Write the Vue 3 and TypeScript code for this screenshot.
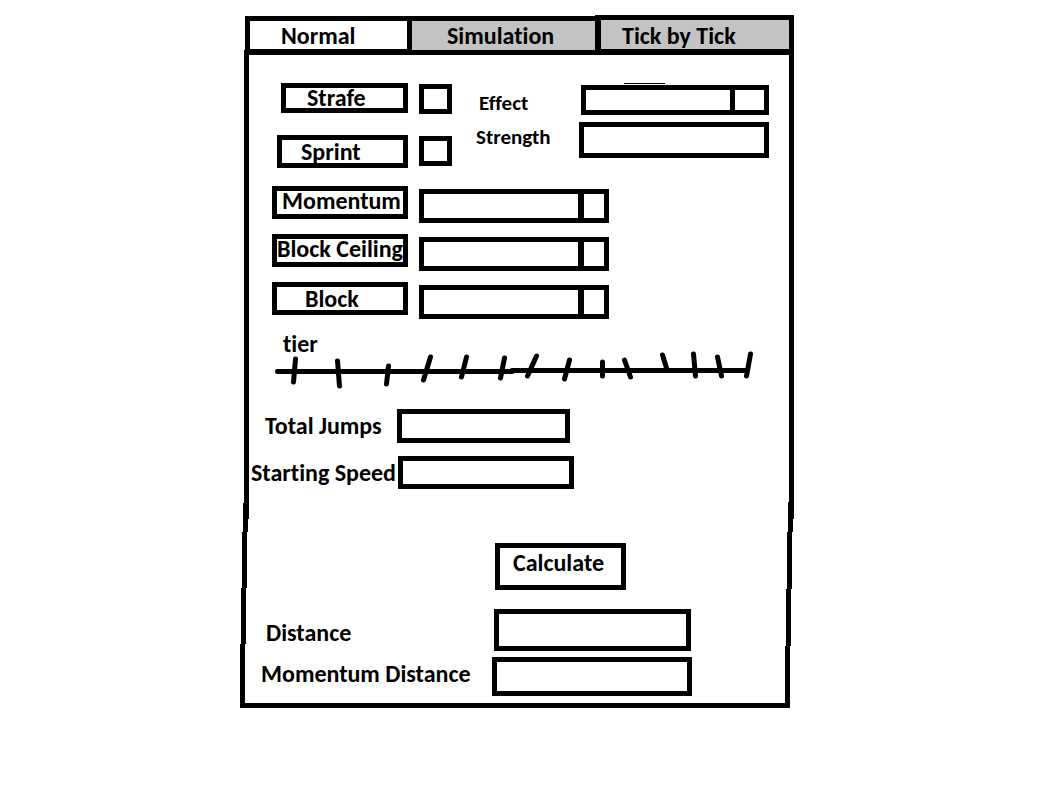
<script setup lang="ts">
import { ref } from 'vue'

type Tick = [number, number, number, number]

const tabs = [
  { id: 'normal', label: 'Normal' },
  { id: 'simulation', label: 'Simulation' },
  { id: 'ticks', label: 'Tick by Tick' },
]
const active = ref('normal')

const switches = [
  { id: 'strafe', label: 'Strafe' },
  { id: 'sprint', label: 'Sprint' },
]

const choices = [
  { id: 'momentum', label: 'Momentum' },
  { id: 'ceiling', label: 'Block Ceiling' },
  { id: 'block', label: 'Block' },
]

const ticks: Tick[] = [
  [295.5, 359, 293.5, 382],
  [337.5, 361, 339.5, 386],
  [388.5, 366, 386.5, 384],
  [430.5, 357, 423.5, 380],
  [466.5, 357, 461.5, 377],
  [504.5, 358, 500.5, 378],
  [536.5, 356, 527.5, 376],
  [569.5, 360, 564.5, 379],
  [602.5, 362, 602.5, 376],
  [624.5, 360, 630.5, 377],
  [662.5, 355, 666.5, 368],
  [693.5, 354, 695.5, 376],
  [717.5, 357, 721.5, 376],
  [750.5, 354, 746.5, 376],
]
</script>

<template>
  <main class="page">
    <form class="sheet" @submit.prevent>
      <svg class="outline" viewBox="0 0 554 693" preserveAspectRatio="none" aria-hidden="true">
        <path
          d="M4 35h5v469h-5z M3 488h5v29h-5z M2 517h5v56h-5z M1 573h5v56h-5z M0 629h5v64h-5z
             M549 35h5v469h-5z M548 487h5v30h-5z M547 517h5v57h-5z M546 574h5v57h-5z M545 631h5v62h-5z
             M0 688h550v5H0z"
        />
      </svg>

      <nav class="tabs">
        <button
          v-for="tab in tabs"
          :key="tab.id"
          type="button"
          class="tab"
          :class="[tab.id, { active: active === tab.id }]"
          @click="active = tab.id"
        >
          {{ tab.label }}
        </button>
      </nav>

      <section class="options">
        <div class="switches">
          <template v-for="item in switches" :key="item.id">
            <label class="name" :class="item.id" :for="item.id">{{ item.label }}</label>
            <input :id="item.id" class="check" type="checkbox" />
          </template>
        </div>
        <div class="effects">
          <label class="effect-label" for="effect">Effect</label>
          <div class="effect-field">
            <select id="effect" class="box drop wide-arrow"><option></option></select>
          </div>
          <label for="strength">Strength</label>
          <input id="strength" class="box strength" type="text" />
        </div>
      </section>

      <section class="choices">
        <div v-for="item in choices" :key="item.id" class="choice">
          <label class="name" :class="item.id" :for="item.id">{{ item.label }}</label>
          <select :id="item.id" class="box drop"><option></option></select>
        </div>
      </section>

      <section class="tier">
        <label for="tier">tier</label>
        <div class="scale">
          <svg viewBox="275 354 478 36" aria-hidden="true">
            <path d="M277.5 371.5H512M512 370.5H747" />
            <line v-for="(t, i) in ticks" :key="i" :x1="t[0]" :y1="t[1]" :x2="t[2]" :y2="t[3]" />
          </svg>
          <input id="tier" type="range" min="0" max="13" value="0" />
        </div>
      </section>

      <section class="numbers">
        <div class="number">
          <label class="jumps" for="jumps">Total Jumps</label>
          <input id="jumps" class="box" type="text" />
        </div>
        <div class="number speed">
          <label for="speed">Starting Speed</label>
          <input id="speed" class="box" type="text" />
        </div>
      </section>

      <button class="calculate" type="submit">Calculate</button>

      <section class="results">
        <div class="result distance">
          <label for="distance">Distance</label>
          <input id="distance" class="box" type="text" readonly />
        </div>
        <div class="result total">
          <label for="momentum-distance">Momentum Distance</label>
          <input id="momentum-distance" class="box" type="text" readonly />
        </div>
      </section>
    </form>
  </main>
</template>

<style>
body {
  margin: 0;
  background: #fff;
}
</style>

<style scoped>
.page {
  padding: 15px 10px 40px 0;
  color: #000;
  font: bold 24px/20px Calibri, Carlito, Lato, sans-serif;
  font-variant-ligatures: none;
}

.page *,
.page *::before {
  box-sizing: border-box;
}

.sheet {
  position: relative;
  max-width: 554px;
  margin: 0 auto;
  padding-bottom: 12px;
}

.outline {
  position: absolute;
  inset: 0;
  width: 100%;
  height: 100%;
  pointer-events: none;
}

label {
  white-space: nowrap;
}

button,
input,
select {
  margin: 0;
  border: 5px solid #000;
  border-radius: 0;
  background: #fff;
  color: #000;
  font: inherit;
  font-variant-ligatures: none;
  appearance: none;
}

.tabs {
  position: relative;
  display: grid;
  grid-template-columns: minmax(0, 167fr) minmax(0, 183fr) minmax(0, 199fr);
  align-items: end;
  margin-left: 5px;
}

.tab {
  height: 39px;
  padding: 2px 0 0;
  border-bottom-width: 6px;
  background: #c3c3c3;
  text-align: left;
  white-space: nowrap;
}

.tab.active {
  background: #fff;
}

.tab.normal {
  padding-left: 31px;
}

.tab.simulation {
  border-left: 0;
  border-right: 0;
  border-bottom-width: 5px;
  padding: 0 0 0 35px;
}

.tab.ticks {
  height: 40px;
  border-left-width: 6px;
  padding-left: 21px;
}

.options {
  display: flex;
  gap: 24px;
  padding: 28px 25px 0 0;
}

.switches {
  display: grid;
  grid-template-columns: 168px 33px;
  gap: 21px 11px;
}

.name {
  justify-self: end;
  width: 136px;
  height: 33px;
  border: 5px solid #000;
}

.name.strafe {
  width: 127px;
  height: 30px;
  padding-left: 21px;
}

.name.sprint {
  width: 131px;
  padding: 2px 0 0 19px;
}

.name.momentum {
  padding-left: 5px;
}

.name.block {
  padding: 2px 0 0 28px;
}

.check {
  width: 33px;
  height: 30px;
  margin-top: 1px;
}

.effects {
  flex: 1;
  display: grid;
  grid-template-columns: 103px 1fr;
  row-gap: 7px;
  align-content: start;
  padding-top: 2px;
  font-size: 21px;
}

.effects label {
  padding-top: 5px;
}

.effects .effect-label {
  padding: 8px 0 0 3px;
}

.effect-field {
  position: relative;
  padding-left: 2px;
}

.effect-field::before {
  content: '';
  position: absolute;
  top: -2px;
  left: 45px;
  width: 41px;
  height: 1px;
  background: #000;
}

.box {
  display: block;
  width: 100%;
  min-width: 0;
  height: 34px;
}

.drop {
  background: linear-gradient(#000, #000) right 20px top / 6px 100% no-repeat #fff;
}

.wide-arrow {
  height: 30px;
  background-position: right 29px top;
  background-size: 5px 100%;
}

.strength {
  height: 36px;
}

.choices {
  display: grid;
  gap: 11px;
  padding-top: 18px;
}

.choice {
  display: grid;
  grid-template-columns: 168px minmax(0, 190px);
  column-gap: 11px;
}

.choice .box {
  margin-top: 3px;
}

.tier {
  padding: 15px 41px 0 35px;
}

.tier label {
  display: block;
  padding-left: 8px;
}

.scale {
  position: relative;
}

.scale svg {
  display: block;
  width: 100%;
  overflow: visible;
  fill: none;
  stroke: #000;
  stroke-width: 5;
  stroke-linecap: round;
}

.scale input {
  position: absolute;
  inset: 0;
  width: 100%;
  height: 100%;
  border: 0;
  background: transparent;
}

.scale input::-webkit-slider-thumb {
  width: 12px;
  height: 30px;
  appearance: none;
  background: transparent;
}

.numbers {
  display: grid;
  gap: 13px;
  padding-top: 19px;
}

.number {
  display: grid;
  grid-template-columns: 146px minmax(0, 173px);
  align-items: center;
  padding-left: 11px;
}

.number .jumps {
  padding-left: 14px;
}

.number.speed {
  grid-template-columns: 147px minmax(0, 176px);
}

.number.speed .box {
  height: 33px;
}

.calculate {
  display: block;
  width: 131px;
  height: 47px;
  margin: 54px 0 19px 255px;
  padding: 0 0 8px 13px;
  text-align: left;
}

.results {
  display: grid;
  gap: 6px;
}

.result {
  display: grid;
  align-items: center;
}

.result.distance {
  grid-template-columns: 228px minmax(0, 197px);
  padding-left: 26px;
}

.result.distance label {
  padding-top: 6px;
}

.result.distance .box {
  height: 42px;
}

.result.total {
  grid-template-columns: 231px minmax(0, 200px);
  padding-left: 21px;
}

.result.total label {
  padding-bottom: 6px;
}

.result.total .box {
  height: 39px;
}
</style>
